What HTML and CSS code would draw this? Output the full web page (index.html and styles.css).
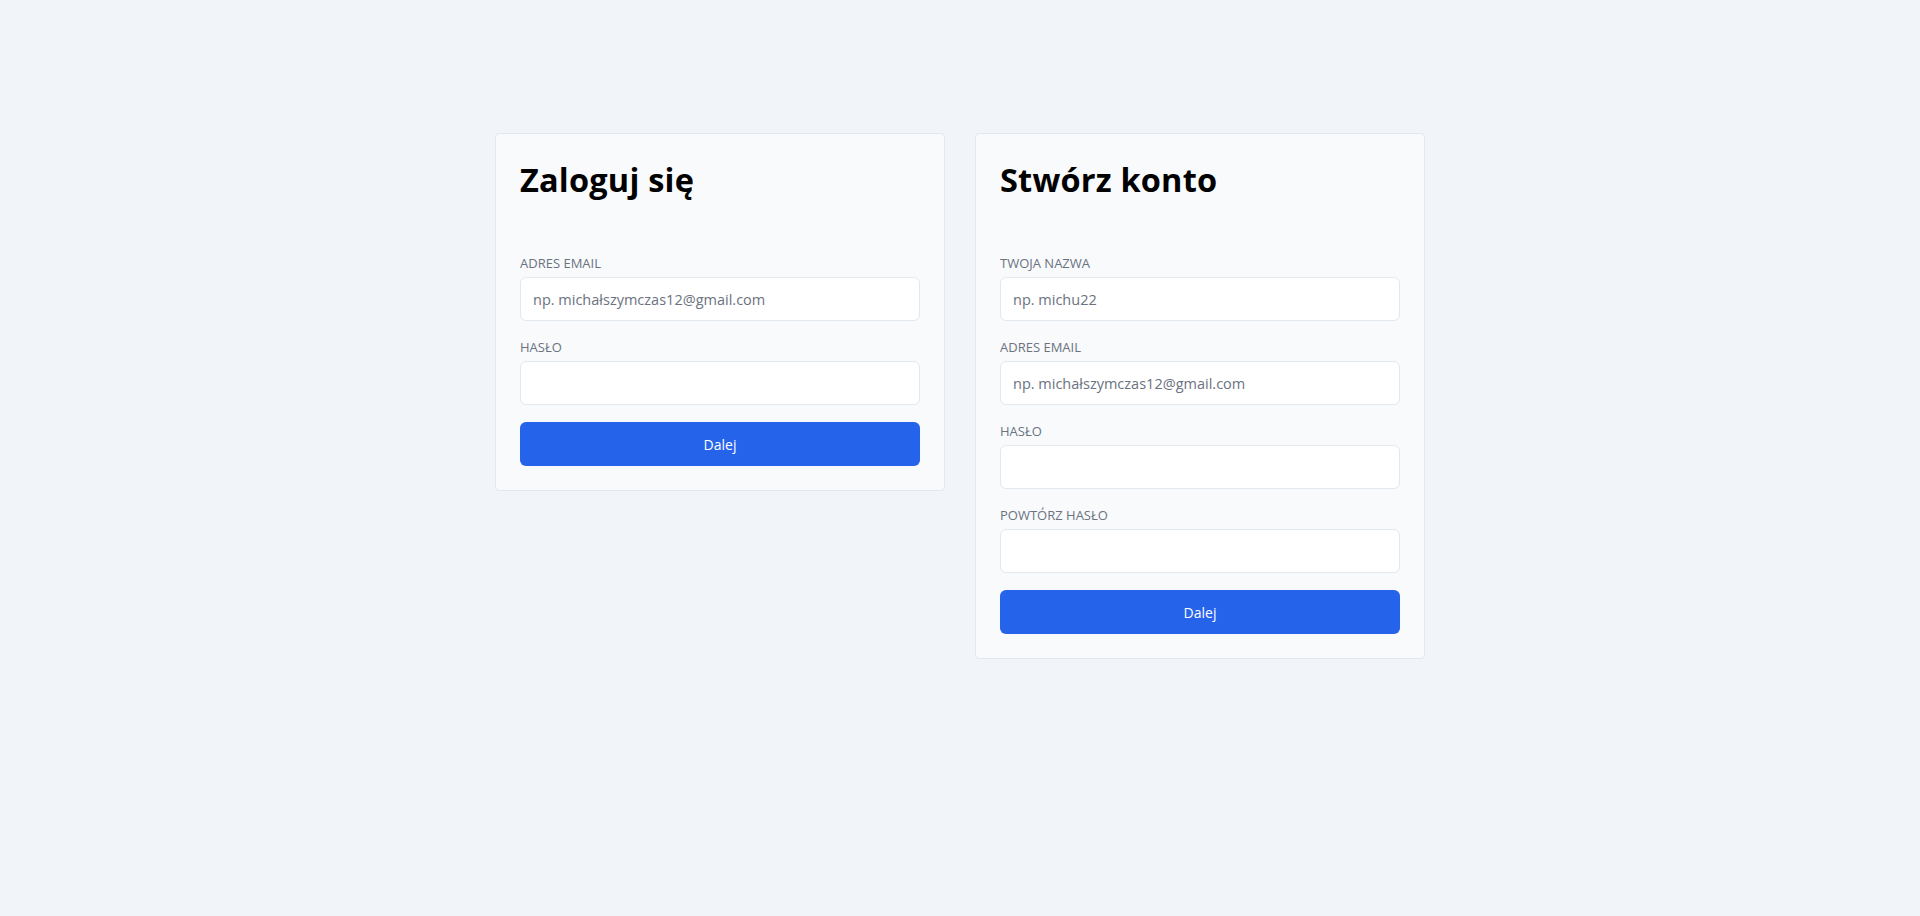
FILE: index.html
```html
<!DOCTYPE html>
<html lang="pl">
<head>
<meta charset="utf-8">
<title>Logowanie</title>
<link rel="stylesheet" href="styles.css">
</head>
<body>
<main class="page">
  <section class="card">
    <h1 class="card-title">Zaloguj się</h1>
    <form class="form">
      <div class="field">
        <label class="label">ADRES EMAIL</label>
        <input class="input" type="email" placeholder="np. michałszymczas12@gmail.com">
      </div>
      <div class="field">
        <label class="label">HASŁO</label>
        <input class="input" type="password">
      </div>
      <button class="btn" type="button">Dalej</button>
    </form>
  </section>
  <section class="card">
    <h1 class="card-title">Stwórz konto</h1>
    <form class="form">
      <div class="field">
        <label class="label">TWOJA NAZWA</label>
        <input class="input" type="text" placeholder="np. michu22">
      </div>
      <div class="field">
        <label class="label">ADRES EMAIL</label>
        <input class="input" type="email" placeholder="np. michałszymczas12@gmail.com">
      </div>
      <div class="field">
        <label class="label">HASŁO</label>
        <input class="input" type="password">
      </div>
      <div class="field">
        <label class="label">POWTÓRZ HASŁO</label>
        <input class="input" type="password">
      </div>
      <button class="btn" type="button">Dalej</button>
    </form>
  </section>
</main>
</body>
</html>
```
FILE: styles.css
```css
* { box-sizing: border-box; }
html, body {
  margin: 0;
  padding: 0;
  background: #f1f5f9;
  font-family: "Open Sans", "Noto Sans", sans-serif;
  color: #000;
}
.page {
  display: flex;
  justify-content: center;
  align-items: flex-start;
  gap: 30px;
  padding-top: 133px;
}
.card {
  width: 450px;
  background: #f8fafc;
  border: 1px solid #e2e8f0;
  border-radius: 4px;
  padding: 24px;
}
.card-title {
  margin: 0;
  font-size: 32.5px;
  line-height: 44px;
  font-weight: 700;
  letter-spacing: 0.2px;
  color: #000;
}
.form {
  margin-top: 51px;
  display: flex;
  flex-direction: column;
}
.field {
  display: flex;
  flex-direction: column;
  margin-bottom: 16px;
}
.label {
  font-size: 13px;
  line-height: 20px;
  color: #6b7280;
  margin-bottom: 4px;
}
.input {
  height: 44px;
  width: 100%;
  border: 1px solid #e2e8f0;
  border-radius: 6px;
  background: #fff;
  padding: 0 12px;
  font-family: inherit;
  font-size: 14.5px;
  color: #111;
  outline: none;
}
.input::placeholder { color: #6b7280; }
.btn {
  height: 44px;
  width: 100%;
  border: none;
  border-radius: 6px;
  background: #2563eb;
  color: #fff;
  font-family: inherit;
  font-size: 14px;
  font-weight: 500;
  margin-top: 1px;
  cursor: pointer;
}
```
